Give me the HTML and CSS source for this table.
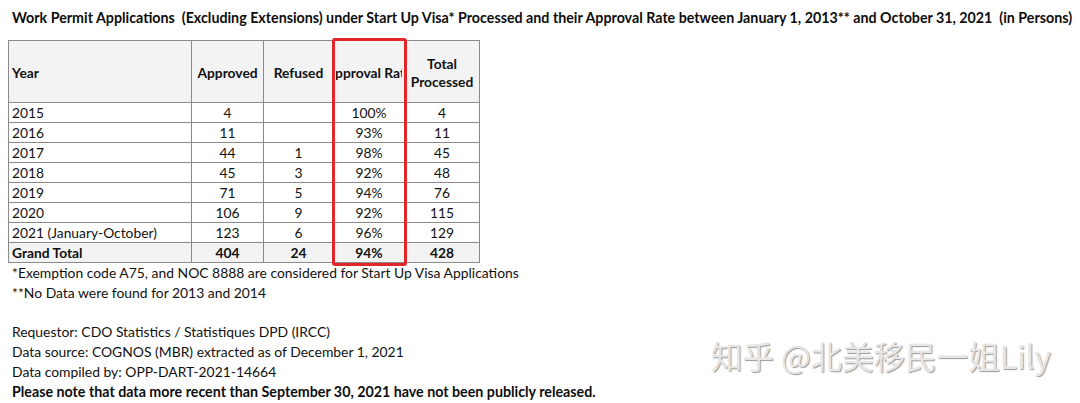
FILE: index.html
```html
<!DOCTYPE html>
<html>
<head>
<meta charset="utf-8">
<link rel="stylesheet" href="styles.css">
</head>
<body>
<div class="page">
  <h1 class="title">Work Permit Applications&nbsp; (Excluding Extensions) under Start Up Visa* Processed and their Approval Rate between January 1, 2013** and October 31, 2021&nbsp; (in Persons)</h1>
  <div class="table-wrap">
    <table class="data">
      <colgroup>
        <col class="c-year"><col class="c-app"><col class="c-ref"><col class="c-rate"><col class="c-tot">
      </colgroup>
      <thead>
        <tr>
          <th class="left">Year</th>
          <th>Approved</th>
          <th>Refused</th>
          <th><div class="clip">Approval Rate</div></th>
          <th>Total<br>Processed</th>
        </tr>
      </thead>
      <tbody>
        <tr><td class="left">2015</td><td>4</td><td></td><td>100%</td><td>4</td></tr>
        <tr><td class="left">2016</td><td>11</td><td></td><td>93%</td><td>11</td></tr>
        <tr><td class="left">2017</td><td>44</td><td>1</td><td>98%</td><td>45</td></tr>
        <tr><td class="left">2018</td><td>45</td><td>3</td><td>92%</td><td>48</td></tr>
        <tr><td class="left">2019</td><td>71</td><td>5</td><td>94%</td><td>76</td></tr>
        <tr><td class="left">2020</td><td>106</td><td>9</td><td>92%</td><td>115</td></tr>
        <tr><td class="left">2021 (January-October)</td><td>123</td><td>6</td><td>96%</td><td>129</td></tr>
        <tr class="total"><td class="left">Grand Total</td><td>404</td><td>24</td><td>94%</td><td>428</td></tr>
      </tbody>
    </table>
    <div class="highlight"></div>
  </div>
  <div class="notes">
    <p>*Exemption code A75, and NOC 8888 are considered for Start Up Visa Applications</p>
    <p>**No Data were found for 2013 and 2014</p>
    <p class="gap">Requestor: CDO Statistics / Statistiques DPD (IRCC)</p>
    <p>Data source: COGNOS (MBR) extracted as of December 1, 2021</p>
    <p>Data compiled by: OPP-DART-2021-14664</p>
    <p class="strong">Please note that data more recent than September 30, 2021 have not been publicly released.</p>
  </div>
  <div class="watermark">知乎 @北美移民一姐Lily</div>
</div>
</body>
</html>
```
FILE: styles.css
```css
html, body {
  margin: 0;
  padding: 0;
  background: #ffffff;
}
.page {
  position: relative;
  width: 1080px;
  height: 403px;
  overflow: hidden;
  font-family: "Lato", "Open Sans", sans-serif;
  color: #111;
}
.title {
  margin: 0;
  padding: 9px 0 0 12px;
  height: 22px;
  font-size: 14.25px;
  line-height: 18px;
  font-weight: 700;
  white-space: nowrap;
  color: #0d0d0d;
}
.table-wrap {
  position: relative;
  margin: 9px 0 0 8px;
  width: 471px;
}
.data {
  border-collapse: collapse;
  table-layout: fixed;
  width: 471px;
  font-size: 13.8px;
  color: #111;
}
.c-year { width: 183px; }
.c-app { width: 72px; }
.c-ref { width: 70px; }
.c-rate { width: 71px; }
.c-tot { width: 75px; }
.data th, .data td {
  border: 1px solid #8a8a8a;
  padding: 0 2px;
  text-align: center;
  white-space: nowrap;
  overflow: hidden;
}
.data th {
  height: 59px;
  background: #f3f3f3;
  font-weight: 700;
  line-height: 18px;
  padding-top: 2px;
}
.data td {
  height: 19px;
  line-height: 19px;
}
.data .left {
  text-align: left;
  padding-left: 3px;
}
.data .total td {
  background: #f3f3f3;
  font-weight: 700;
}
.clip {
  display: flex;
  justify-content: center;
  overflow: hidden;
  white-space: nowrap;
}
.highlight {
  position: absolute;
  left: 324px;
  top: -2px;
  width: 69px;
  height: 222px;
  border: 3px solid #e0282a;
  border-radius: 3px;
}
.notes {
  padding: 0 0 0 12px;
  font-size: 13.9px;
  line-height: 19.8px;
  color: #111;
}
.notes p {
  margin: 0;
  white-space: nowrap;
}
.notes .gap {
  margin-top: 19.8px;
}
.notes .strong {
  font-weight: 700;
  font-size: 14.25px;
  color: #0d0d0d;
}
.watermark {
  position: absolute;
  left: 711px;
  top: 336px;
  font-family: "Noto Sans CJK SC", "Noto Sans", sans-serif;
  font-size: 31.5px;
  line-height: 38px;
  color: #e6e6e6;
  text-shadow: 1px 1px 1px #9a9a9a, -1px -1px 0 #ffffff;
  white-space: nowrap;
}
```
